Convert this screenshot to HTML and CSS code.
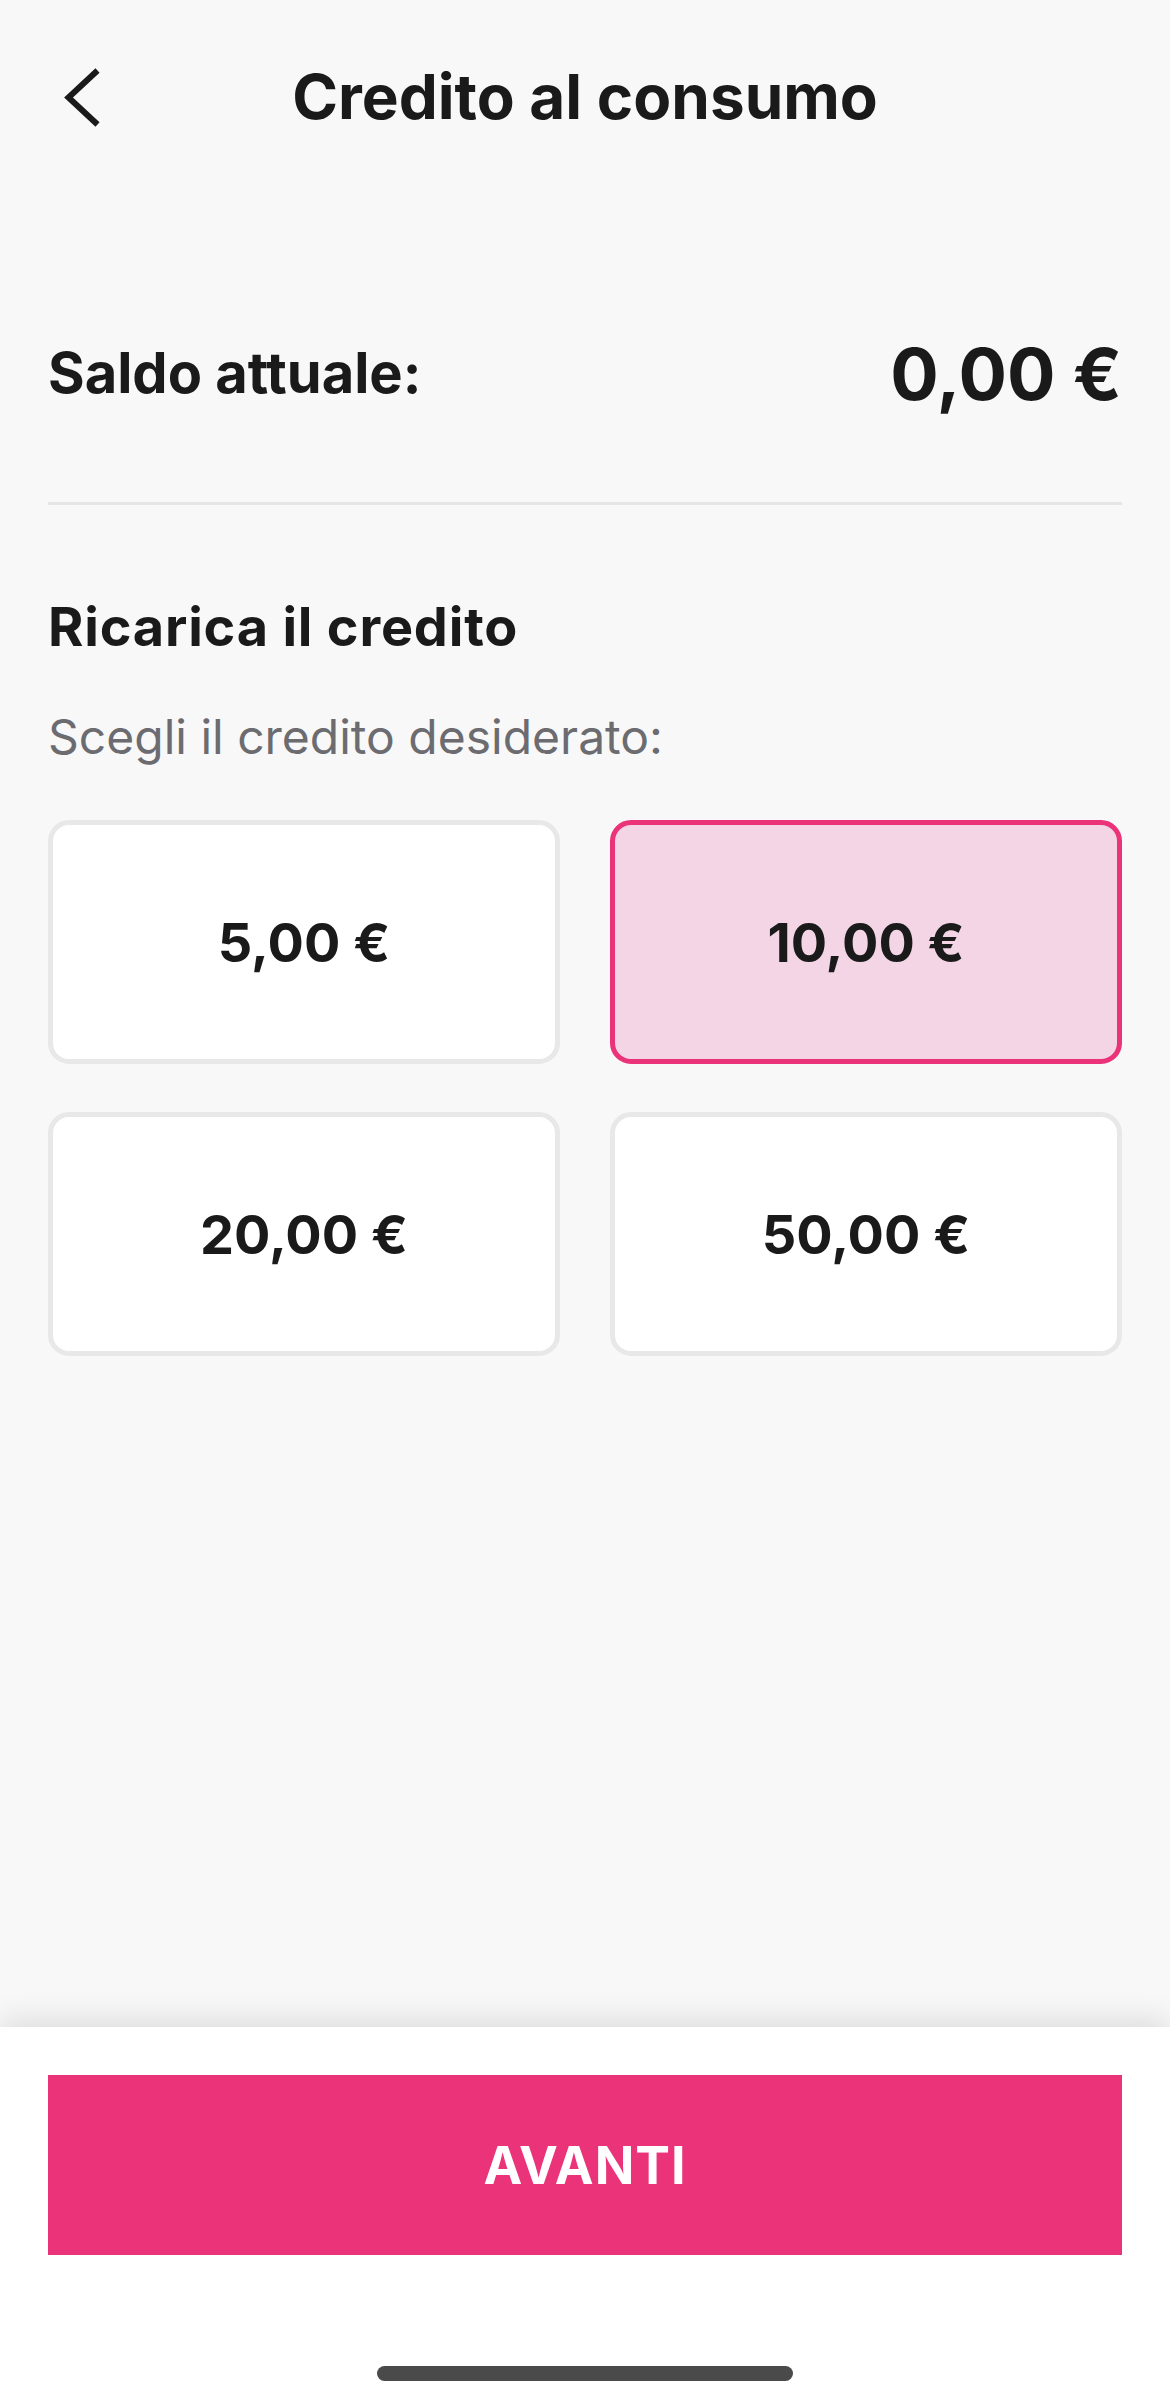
FILE: index.html
```html
<!DOCTYPE html>
<html lang="it">
<head>
  <meta charset="UTF-8">
  <meta name="viewport" content="width=device-width, initial-scale=1">
  <title>Credito al consumo</title>
  <link rel="stylesheet" href="styles.css">
</head>
<body>

<div class="page">
  <header class="top-bar">
    <button class="btn-back" type="button" aria-label="Indietro">
      <svg width="40" height="60" viewBox="0 0 40 60">
        <path d="M37.5 3.5 L8.5 30.5 L37.5 57.5" fill="none" stroke="#1a1a1a" stroke-width="6"/>
      </svg>
    </button>
    <h1>Credito al consumo</h1>
    <span></span>
  </header>

  <main class="content">
    <div class="balance-row">
      <span class="balance-label">Saldo attuale:</span>
      <span class="balance-amount">0,00 €</span>
    </div>

    <hr class="divider">

    <h2>Ricarica il credito</h2>
    <p class="hint">Scegli il credito desiderato:</p>

    <div class="amount-grid">
      <button type="button" class="amount-card">5,00 €</button>
      <button type="button" class="amount-card selected">10,00 €</button>
      <button type="button" class="amount-card">20,00 €</button>
      <button type="button" class="amount-card">50,00 €</button>
    </div>
  </main>

  <footer class="bottom-panel">
    <button type="button" class="btn-next">AVANTI</button>
    <div class="home-indicator"></div>
  </footer>
</div>

<script>
  const cards = document.querySelectorAll('.amount-card');

  cards.forEach((card) => {
    card.addEventListener('click', () => {
      cards.forEach((c) => c.classList.remove('selected'));
      card.classList.add('selected');
    });
  });
</script>

</body>
</html>
```

FILE: styles.css
```css
body {
  margin: 0;
  font-family: Inter, 'Noto Sans', sans-serif;
  background: #f8f8f8;
  color: #1a1a1a;
}

.page {
  display: flex;
  flex-direction: column;
  min-height: 100vh;
}

.top-bar {
  display: grid;
  grid-template-columns: 1fr auto 1fr;
  align-items: center;
  height: 194px;
  padding: 0 60px;
}

.btn-back {
  justify-self: start;
  display: flex;
  padding: 0;
  border: none;
  background: none;
  cursor: pointer;
}

.top-bar h1 {
  margin: 0;
  font-size: 62px;
  line-height: 74px;
  font-weight: 700;
}

.content {
  flex: 1;
  padding: 136px 48px 0;
}

.balance-row {
  display: flex;
  justify-content: space-between;
  align-items: center;
  height: 86px;
}

.balance-label {
  font-size: 56px;
  font-weight: 700;
}

.balance-amount {
  font-size: 72px;
  font-weight: 700;
}

.divider {
  margin: 86px 0 0;
  border: none;
  height: 3px;
  background: #e6e6e6;
}

.content h2 {
  margin: 90px 0 0;
  font-size: 54px;
  line-height: 64px;
  font-weight: 700;
  letter-spacing: 0.8px;
}

.hint {
  margin: 49px 0 0;
  font-size: 48px;
  line-height: 58px;
  color: #6b6b70;
}

.amount-grid {
  display: grid;
  grid-template-columns: 1fr 1fr;
  gap: 48px 50px;
  margin-top: 54px;
}

.amount-card {
  height: 244px;
  border: 5px solid #e8e8e8;
  border-radius: 21px;
  background: white;
  font-family: inherit;
  font-size: 54px;
  font-weight: 700;
  color: #1a1a1a;
  cursor: pointer;
}

.amount-card.selected {
  border-color: #ea3379;
  background: #f3d5e5;
}

.bottom-panel {
  display: flex;
  flex-direction: column;
  align-items: center;
  height: 378px;
  padding: 48px 48px 0;
  box-sizing: border-box;
  background: white;
  box-shadow: 0 -6px 30px rgba(0,0,0,0.12);
}

.btn-next {
  width: 100%;
  height: 180px;
  border: none;
  background: #ea3379;
  color: white;
  font-family: inherit;
  font-size: 52px;
  font-weight: 700;
  letter-spacing: 1px;
  cursor: pointer;
}

.home-indicator {
  width: 416px;
  height: 15px;
  margin-top: 111px;
  border-radius: 8px;
  background: #4a4a4a;
}
```
